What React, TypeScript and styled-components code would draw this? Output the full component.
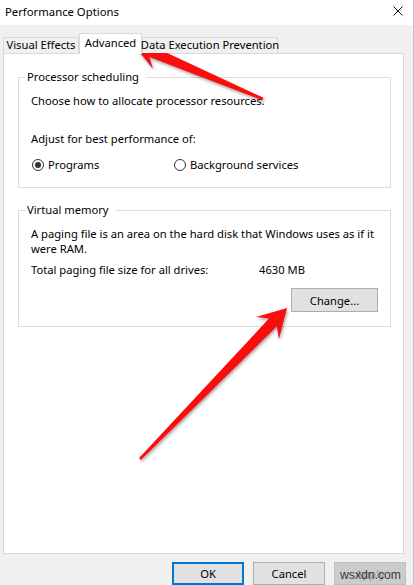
import styled, { createGlobalStyle } from 'styled-components'

const GlobalStyle = createGlobalStyle`
	html, body {
		margin: 0;
		padding: 0;
		background: #f0f0f0;
	}
	body {
		font-family: 'Noto Sans', 'Liberation Sans', sans-serif;
		font-size: 11.2px;
		color: #000;
	}
`

const Window = styled.div`
	position: relative;
	width: 414px;
	height: 585px;
	box-sizing: border-box;
	overflow: hidden;
	display: flex;
	flex-direction: column;
	background: #f0f0f0;
	border-right: 1px solid #c6c6c6;
`

const TitleBar = styled.div`
	flex-shrink: 0;
	height: 25px;
	box-sizing: border-box;
	padding: 0 10px 3px 5px;
	display: flex;
	align-items: center;
	justify-content: space-between;
	background: #fff;
	font-size: 11.3px;
`

const TabStrip = styled.div`
	position: relative;
	z-index: 1;
	display: flex;
	align-items: flex-end;
	padding: 8px 0 0 3px;
	margin-bottom: -1px;
`

const Tab = styled.div<{ $active?: boolean; $width: number }>`
	width: ${p => p.$width}px;
	height: ${p => (p.$active ? 21 : 16)}px;
	margin-bottom: ${p => (p.$active ? 0 : 1)}px;
	box-sizing: border-box;
	padding-bottom: ${p => (p.$active ? 3 : 2)}px;
	display: flex;
	align-items: center;
	justify-content: center;
	white-space: nowrap;
	background: ${p => (p.$active ? '#fff' : '#f0f0f0')};
	border: 1px solid #d9d9d9;
	border-bottom: none;
`

const Panel = styled.div`
	height: 506px;
	margin: 0 9px 0 3px;
	box-sizing: border-box;
	padding: 15px 12px 0 14px;
	background: #fff;
	border: 1px solid #d9d9d9;
`

const Group = styled.fieldset`
	margin: 0 0 14px;
	padding: 8px 12px 14px;
	min-width: 0;
	border: 1px solid #dcdcdc;
`

const Legend = styled.legend`
	margin-left: -6px;
	padding: 0 7px 0 2px;
	line-height: 16px;
`

const Line = styled.div<{ $gap?: number }>`
	margin-top: ${p => p.$gap ?? 0}px;
	line-height: 16px;
`

const Paragraph = styled.p`
	margin: 0;
	line-height: 15px;
`

const RadioRow = styled.div`
	display: flex;
	margin-top: 10px;
	padding-left: 1px;
	line-height: 16px;
`

const RadioOption = styled.label<{ $width?: number }>`
	display: flex;
	align-items: center;
	gap: 4px;
	width: ${p => (p.$width ? `${p.$width}px` : 'auto')};
`

const RadioCircle = styled.span<{ $checked?: boolean }>`
	position: relative;
	width: 12px;
	height: 12px;
	box-sizing: border-box;
	border: 1px solid #333;
	border-radius: 50%;
	background: #fff;

	&::after {
		content: '';
		display: ${p => (p.$checked ? 'block' : 'none')};
		position: absolute;
		inset: 2px;
		border-radius: 50%;
		background: #333;
	}
`

const SizeRow = styled.div`
	display: flex;
	margin-top: 6px;
	line-height: 16px;
`

const SizeLabel = styled.span`
	width: 228px;
`

const GroupActions = styled.div`
	display: flex;
	justify-content: flex-end;
	margin-top: 10px;
`

const Button = styled.div<{ $variant?: 'default' | 'disabled'; $width: number }>`
	width: ${p => p.$width}px;
	height: ${p => (p.$width > 80 ? 24 : 23)}px;
	box-sizing: border-box;
	display: flex;
	align-items: center;
	justify-content: center;
	background: ${p => (p.$variant === 'disabled' ? '#cccccc' : '#e1e1e1')};
	color: ${p => (p.$variant === 'disabled' ? '#9a9a9a' : '#000')};
	border: ${p =>
		p.$variant === 'default'
			? '2px solid #0078d7'
			: p.$variant === 'disabled'
			? '1px solid #bfbfbf'
			: '1px solid #adadad'};
`

const ButtonRow = styled.div`
	display: flex;
	justify-content: flex-end;
	gap: 9px;
	margin-top: 8px;
	padding-right: 7px;
`

// watermark stamped over the Apply button in the screenshot
const Watermark = styled.span`
	position: absolute;
	top: 568px;
	right: 12px;
	font-family: 'Liberation Sans', Arial, sans-serif;
	font-size: 12.2px;
	line-height: 14px;
	color: #3a3a3a;
	pointer-events: none;
`

const Annotations = styled.svg`
	position: absolute;
	top: 0;
	left: 0;
	pointer-events: none;
`

type Pt = [number, number]

function arrowPoints(tail: Pt, tip: Pt, head: number, wing: number, neck: number, tailW: number) {
	const dx = tip[0] - tail[0]
	const dy = tip[1] - tail[1]
	const len = Math.hypot(dx, dy)
	const ux = dx / len
	const uy = dy / len
	const nx = -uy
	const ny = ux
	const at = (back: number, side: number) =>
		`${(tip[0] - ux * back + nx * side).toFixed(1)},${(tip[1] - uy * back + ny * side).toFixed(1)}`
	const fromTail = (side: number) =>
		`${(tail[0] + nx * side).toFixed(1)},${(tail[1] + ny * side).toFixed(1)}`
	return [
		fromTail(tailW),
		at(head * 0.72, neck),
		at(head, wing),
		at(0, 0),
		at(head, -wing),
		at(head * 0.72, -neck),
		fromTail(-tailW),
	].join(' ')
}

function CloseIcon() {
	return (
		<svg width='10' height='10' viewBox='0 0 10 10'>
			<path d='M0.5 0.5 L9.5 9.5 M9.5 0.5 L0.5 9.5' stroke='#111' strokeWidth='1' />
		</svg>
	)
}

export default function App() {
	return (
		<>
			<GlobalStyle />
			<Window>
				<TitleBar>
					<span>Performance Options</span>
					<CloseIcon />
				</TitleBar>

				<TabStrip>
					<Tab $width={76}>Visual Effects</Tab>
					<Tab $width={63} $active>
						Advanced
					</Tab>
					<Tab $width={136}>Data Execution Prevention</Tab>
				</TabStrip>

				<Panel>
					<Group>
						<Legend>Processor scheduling</Legend>
						<Line>Choose how to allocate processor resources.</Line>
						<Line $gap={22}>Adjust for best performance of:</Line>
						<RadioRow>
							<RadioOption $width={142}>
								<RadioCircle $checked />
								Programs
							</RadioOption>
							<RadioOption>
								<RadioCircle />
								Background services
							</RadioOption>
						</RadioRow>
					</Group>

					<Group>
						<Legend>Virtual memory</Legend>
						<Paragraph>
							A paging file is an area on the hard disk that Windows uses as if it
							<br />
							were RAM.
						</Paragraph>
						<SizeRow>
							<SizeLabel>Total paging file size for all drives:</SizeLabel>
							<span>4630 MB</span>
						</SizeRow>
						<GroupActions>
							<Button $width={87}>Change...</Button>
						</GroupActions>
					</Group>
				</Panel>

				<ButtonRow>
					<Button $width={72} $variant='default'>
						OK
					</Button>
					<Button $width={72}>Cancel</Button>
					<Button $width={72} $variant='disabled'>
						Apply
					</Button>
				</ButtonRow>

				<Watermark>wsxdn.com</Watermark>

				<Annotations width='414' height='585' viewBox='0 0 414 585'>
					<defs>
						<filter id='arrowShadow' x='-20%' y='-20%' width='140%' height='140%'>
							<feDropShadow dx='1' dy='2' stdDeviation='1.4' floodColor='#000' floodOpacity='0.35' />
						</filter>
					</defs>
					<g fill='#fa0a0a' filter='url(#arrowShadow)'>
						<polygon points={arrowPoints([263, 99], [133, 44], 28, 15, 5.5, 1.3)} />
						<polygon points={arrowPoints([140, 459], [287, 308], 28, 16, 5.5, 1.3)} />
					</g>
				</Annotations>
			</Window>
		</>
	)
}
